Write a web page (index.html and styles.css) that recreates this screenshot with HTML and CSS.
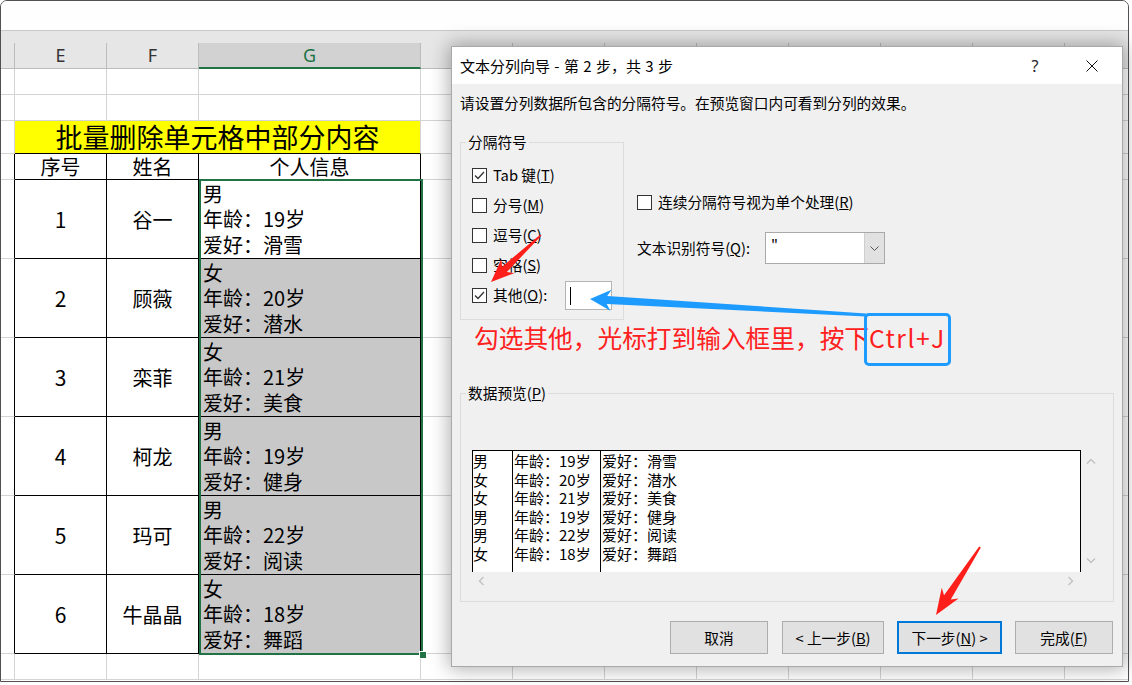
FILE: index.html
```html
<!DOCTYPE html>
<html lang="zh-CN">
<head>
<meta charset="utf-8">
<title>文本分列向导</title>
<link rel="stylesheet" href="styles.css">
</head>
<body>
<div class="screen">
  <div class="window">
    <div class="topbar"></div>
    <div class="band"></div>
    <div class="sheet">
      <div class="c hd"></div><div class="c hd">E</div><div class="c hd">F</div><div class="c hd sel">G</div><div class="c hd rest"></div>
      <div class="c"></div><div class="c"></div><div class="c"></div><div class="c"></div><div class="c rest"></div>
      <div class="c"></div><div class="c"></div><div class="c"></div><div class="c"></div><div class="c rest"></div>
      <div class="c"></div><div class="c title">批量删除单元格中部分内容</div><div class="c rest"></div>
      <div class="c lb"></div><div class="c tb">序号</div><div class="c tb">姓名</div><div class="c tb">个人信息</div><div class="c rest"></div>

      <div class="gcol">
        <div class="c tb info"><span>男</span><span>年龄：19岁</span><span>爱好：滑雪</span></div>
        <div class="c tb info fill"><span>女</span><span>年龄：20岁</span><span>爱好：潜水</span></div>
        <div class="c tb info fill"><span>女</span><span>年龄：21岁</span><span>爱好：美食</span></div>
        <div class="c tb info fill"><span>男</span><span>年龄：19岁</span><span>爱好：健身</span></div>
        <div class="c tb info fill"><span>男</span><span>年龄：22岁</span><span>爱好：阅读</span></div>
        <div class="c tb info fill"><span>女</span><span>年龄：18岁</span><span>爱好：舞蹈</span></div>
        <span class="handle"></span>
      </div>

      <div class="c lb"></div><div class="c tb num">1</div><div class="c tb">谷一</div><div class="c rest"></div>
      <div class="c lb"></div><div class="c tb num">2</div><div class="c tb">顾薇</div><div class="c rest"></div>
      <div class="c lb"></div><div class="c tb num">3</div><div class="c tb">栾菲</div><div class="c rest"></div>
      <div class="c lb"></div><div class="c tb num">4</div><div class="c tb">柯龙</div><div class="c rest"></div>
      <div class="c lb"></div><div class="c tb num">5</div><div class="c tb">玛可</div><div class="c rest"></div>
      <div class="c lb"></div><div class="c tb num">6</div><div class="c tb">牛晶晶</div><div class="c rest"></div>
      <div class="c"></div><div class="c"></div><div class="c"></div><div class="c"></div><div class="c rest"></div>
    </div>
  </div>

  <div class="dialog">
    <div class="titlebar">
      <span class="dtitle">文本分列向导 - 第 2 步，共 3 步</span>
      <span class="tbtn help">?</span>
      <span class="tbtn close"><svg width="12" height="12" viewBox="0 0 12 12"><path d="M0.5 0.5L11.5 11.5M11.5 0.5L0.5 11.5" stroke="#111" stroke-width="1" fill="none"/></svg></span>
    </div>
    <div class="dbody">
      <p class="instr">请设置分列数据所包含的分隔符号。在预览窗口内可看到分列的效果。</p>
      <div class="mainrow">
        <fieldset class="group sep">
          <legend>分隔符号</legend>
          <div class="inner">
            <div class="chk"><span class="box"><svg width="13" height="13" viewBox="0 0 13 13"><polyline points="2,6.5 5,9.5 11,3" fill="none" stroke="#333" stroke-width="1.3"/></svg></span><span>Tab 键(<u>T</u>)</span></div>
            <div class="chk"><span class="box"></span><span>分号(<u>M</u>)</span></div>
            <div class="chk"><span class="box"></span><span>逗号(<u>C</u>)</span></div>
            <div class="chk"><span class="box"></span><span>空格(<u>S</u>)</span></div>
            <div class="chk"><span class="box"><svg width="13" height="13" viewBox="0 0 13 13"><polyline points="2,6.5 5,9.5 11,3" fill="none" stroke="#333" stroke-width="1.3"/></svg></span><span class="olabel">其他(<u>O</u>):</span><span class="other"><i class="caret"></i></span></div>
          </div>
        </fieldset>
        <div class="opts">
          <div class="chk"><span class="box"></span><span>连续分隔符号视为单个处理(<u>R</u>)</span></div>
          <div class="qualifier">
            <span class="qlabel">文本识别符号(<u>Q</u>):</span>
            <div class="combo"><span class="val">"</span><span class="drop"><svg width="9" height="5" viewBox="0 0 9 5"><polyline points="0.5,0.5 4.5,4.5 8.5,0.5" fill="none" stroke="#555" stroke-width="1"/></svg></span></div>
          </div>
        </div>
      </div>
      <fieldset class="group preview">
        <legend>数据预览(<u>P</u>)</legend>
        <div class="inner">
          <div class="pv">
            <div class="pvdata">
              <div class="pcol c1"><div>男</div><div>女</div><div>女</div><div>男</div><div>男</div><div>女</div></div>
              <div class="pcol c2"><div>年龄：19岁</div><div>年龄：20岁</div><div>年龄：21岁</div><div>年龄：19岁</div><div>年龄：22岁</div><div>年龄：18岁</div></div>
              <div class="pcol c3"><div>爱好：滑雪</div><div>爱好：潜水</div><div>爱好：美食</div><div>爱好：健身</div><div>爱好：阅读</div><div>爱好：舞蹈</div></div>
            </div>
            <div class="vscroll">
              <svg width="10" height="6" viewBox="0 0 10 6"><polyline points="1,5.5 5,1.5 9,5.5" fill="none" stroke="#c2c2c2" stroke-width="1.5"/></svg>
              <svg width="10" height="6" viewBox="0 0 10 6"><polyline points="1,0.5 5,4.5 9,0.5" fill="none" stroke="#c2c2c2" stroke-width="1.5"/></svg>
            </div>
            <div class="hscroll">
              <svg width="6" height="10" viewBox="0 0 6 10"><polyline points="5.5,1 1.5,5 5.5,9" fill="none" stroke="#c2c2c2" stroke-width="1.5"/></svg>
              <svg width="6" height="10" viewBox="0 0 6 10"><polyline points="0.5,1 4.5,5 0.5,9" fill="none" stroke="#c2c2c2" stroke-width="1.5"/></svg>
            </div>
            <div class="corner"></div>
          </div>
        </div>
      </fieldset>
      <div class="buttons">
        <div class="btn w98 first">取消</div>
        <div class="btn w102">&lt; 上一步(<u>B</u>)</div>
        <div class="btn w105 default">下一步(<u>N</u>) &gt;</div>
        <div class="btn w98">完成(<u>F</u>)</div>
      </div>
    </div>
  </div>

  <div class="annot">
    <svg class="arrows" width="1132" height="685" viewBox="0 0 1132 685">
      <g transform="translate(590 299) rotate(-176.68)"><polygon points="0,0 -21,-10.5 -17,-4 -276.5,-1.5 -276.5,1.5 -17,4 -21,10.5" fill="#1e9bff"/></g>
      <g transform="translate(491 282) rotate(136.77)"><polygon points="0,0 -23,-9.5 -18.5,-3.5 -68.6,-0.8 -68.6,0.8 -18.5,3.5 -23,9.5" fill="#ff1f1a"/></g>
      <g transform="translate(936 615) rotate(122.91)"><polygon points="0,0 -26,-10 -21,-4 -81,-1 -81,1 -21,4 -26,10" fill="#ff1f1a"/></g>
    </svg>
    <div class="note">勾选其他，光标打到输入框里，按下<span class="key">Ctrl+J</span></div>
    <div class="keybox"></div>
  </div>
</div>
</body>
</html>
```

FILE: styles.css
```css
* { box-sizing: border-box; }
html, body { margin: 0; padding: 0; }
body {
  background: #fff;
  font-family: "Noto Sans CJK SC", "Noto Sans", sans-serif;
  color: #000;
}
.screen {
  position: relative;
  width: 1132px;
  height: 685px;
  overflow: hidden;
  background: #fff;
}

/* ---------- spreadsheet window ---------- */
.window {
  width: 1129px;
  height: 682px;
  border: 1px solid #505050;
  border-radius: 7px 7px 0 0;
  overflow: hidden;
  background: #fff;
}
.topbar {
  height: 30px;
  background: #fefefe;
  border-bottom: 1px solid #c8c8c8;
}
.band {
  height: 12px;
  background: #e6e6e6;
}
.sheet {
  display: grid;
  grid-template-columns: 14px 92px 92px 222px 1fr;
  grid-template-rows: 26px 26px 26px 33px 26px repeat(6, 79px) 26px;
}
.c {
  display: flex;
  align-items: center;
  justify-content: center;
  border-right: 1px solid #d4d4d4;
  border-bottom: 1px solid #d4d4d4;
  font-size: 20px;
  line-height: 25px;
  white-space: nowrap;
  min-width: 0;
}
.hd {
  background: #e6e6e6;
  border-right-color: #bcbcbc;
  border-bottom-color: #bcbcbc;
  font-family: "Noto Sans", sans-serif;
  font-size: 18px;
  color: #333;
}
.hd.sel {
  background: #d2d2d2;
  color: #217346;
  border-bottom: 2px solid #217346;
}
.rest {
  border-right: 0;
  background-image: repeating-linear-gradient(to right, transparent 0 91px, #d4d4d4 91px 92px);
}
.hd.rest {
  background-image: repeating-linear-gradient(to right, transparent 0 91px, #bcbcbc 91px 92px);
}
.title {
  grid-column: span 3;
  background: #ffff00;
  border-bottom-color: #000;
  font-size: 27px;
  line-height: 32px;
}
.lb { border-right-color: #000; }
.tb { border-right-color: #000; border-bottom-color: #000; }
.num { font-size: 21px; }

.gcol {
  grid-column: 4;
  grid-row: 6 / 12;
  display: grid;
  grid-template-rows: repeat(6, 79px);
  position: relative;
}
.gcol::after {
  content: "";
  position: absolute;
  top: -1px;
  left: 0;
  right: -2px;
  bottom: -1px;
  border: 2px solid #217346;
  pointer-events: none;
}
.handle {
  position: absolute;
  right: -6px;
  bottom: -5px;
  width: 8px;
  height: 8px;
  background: #217346;
  border: 1px solid #fff;
  z-index: 2;
}
.info {
  flex-direction: column;
  align-items: flex-start;
  justify-content: center;
  padding-left: 4px;
  line-height: 25.5px;
}
.fill { background: #c8c8c8; }

/* ---------- dialog ---------- */
.dialog {
  position: absolute;
  left: 451px;
  top: 46px;
  width: 672px;
  height: 621px;
  border: 1px solid #a9a9a9;
  background: #f0f0f0;
  box-shadow: 0 0 18px 2px rgba(0, 0, 0, 0.32);
  display: flex;
  flex-direction: column;
  font-size: 14.7px;
  line-height: 20px;
}
.titlebar {
  height: 37px;
  flex: none;
  background: #fff;
  display: flex;
  align-items: center;
}
.dtitle {
  flex: 1;
  padding-left: 8px;
  font-size: 15px;
  word-spacing: 1px;
}
.tbtn {
  width: 46px;
  height: 37px;
  display: flex;
  align-items: center;
  justify-content: center;
}
.help {
  margin-right: 11px;
  font-family: "Noto Sans", sans-serif;
  font-size: 16px;
  color: #222;
}
.close { margin-right: 7px; }

.dbody {
  flex: 1;
  padding: 9px 9px 0 8px;
  display: flex;
  flex-direction: column;
}
.instr {
  margin: 0;
  height: 20px;
  white-space: nowrap;
}
.mainrow {
  display: flex;
  margin-top: 19px;
}
.group {
  margin: 0;
  padding: 0;
  border: 1px solid #dcdcdc;
  min-width: 0;
}
.group legend {
  margin-left: 5px;
  padding: 0 2px;
  line-height: 20px;
  font-size: 14.7px;
}
.sep {
  width: 164px;
  height: 188px;
  flex: none;
}
.sep .inner { padding: 8px 0 0 11px; }
.chk {
  display: flex;
  align-items: center;
  height: 30px;
  gap: 6px;
  white-space: nowrap;
}
.box {
  width: 15px;
  height: 15px;
  flex: none;
  border: 1px solid #333;
  background: #fff;
  display: flex;
  align-items: center;
  justify-content: center;
}
.olabel { width: 66px; }
.other {
  width: 47px;
  height: 29px;
  flex: none;
  border: 1px solid #b4b4b4;
  background: #fff;
}
.caret {
  display: block;
  width: 1px;
  height: 18px;
  margin: 5px 0 0 4px;
  background: #000;
}
.opts {
  margin-left: 13px;
  padding-top: 55px;
}
.qualifier {
  display: flex;
  align-items: center;
  height: 32px;
  margin-top: 15px;
}
.qlabel {
  width: 128px;
  white-space: nowrap;
}
.combo {
  width: 120px;
  height: 32px;
  border: 1px solid #a9a9a9;
  background: #fff;
  display: flex;
}
.val {
  flex: 1;
  padding: 3px 0 0 5px;
}
.drop {
  width: 20px;
  background: #e1e1e1;
  border-left: 1px solid #cfcfcf;
  display: flex;
  align-items: center;
  justify-content: center;
}

.preview {
  margin-top: 63px;
  width: 654px;
  height: 219px;
}
.preview .inner { padding: 47px 0 0 11px; }
.pv {
  display: grid;
  grid-template-columns: 609px 19px;
  grid-template-rows: 122px 18px;
  width: 628px;
}
.pvdata {
  background: #fff;
  border: 1px solid #000;
  border-bottom: 0;
  display: flex;
  font-size: 15px;
  line-height: 18.6px;
  white-space: nowrap;
  overflow: hidden;
}
.pcol {
  border-right: 1px solid #000;
  padding: 1px 0 0 1px;
}
.pcol.c1 { width: 40px; padding-left: 0; }
.pcol.c2 { width: 88px; }
.pcol.c3 { flex: 1; border-right: 0; }
.vscroll {
  display: flex;
  flex-direction: column;
  justify-content: space-between;
  align-items: center;
  padding: 8px 0 8px 0;
}
.hscroll {
  display: flex;
  justify-content: space-between;
  align-items: center;
  padding: 0 7px 0 6px;
}

.buttons {
  display: flex;
  justify-content: flex-end;
  gap: 13px;
  margin-top: 19px;
}
.btn {
  height: 33px;
  border: 1px solid #adadad;
  background: #e1e1e1;
  display: flex;
  align-items: center;
  justify-content: center;
  white-space: nowrap;
}
.btn.first { margin-right: 1px; }
.w98 { width: 98px; }
.w102 { width: 102px; }
.w105 { width: 105px; }
.btn.default { border: 2px solid #0078d7; }

/* ---------- annotation layer ---------- */
.annot {
  position: absolute;
  left: 0;
  top: 0;
  width: 1132px;
  height: 685px;
  pointer-events: none;
}
.arrows {
  position: absolute;
  left: 0;
  top: 0;
}
.note {
  position: absolute;
  left: 474px;
  top: 322px;
  font-size: 24.7px;
  line-height: 30px;
  color: #ff2020;
  white-space: nowrap;
}
.note .key { letter-spacing: 1.5px; }
.keybox {
  position: absolute;
  left: 864px;
  top: 313px;
  width: 87px;
  height: 53px;
  border: 3px solid #1e9bff;
  border-radius: 5px;
}
```
